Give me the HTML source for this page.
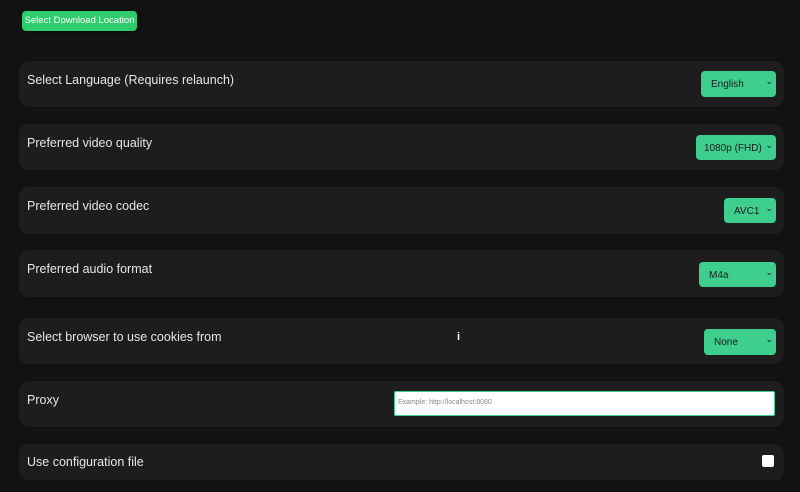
<!DOCTYPE html>
<html><head><style>
body{margin:0;width:800px;height:492px;background:#121212;font-family:"Liberation Sans",sans-serif;position:relative;overflow:hidden}
.btn{position:absolute;left:22px;top:11px;width:115px;height:20px;background:#2ecc6a;border-radius:4px;color:#fff;font-size:9.5px;line-height:20px;text-align:center;white-space:nowrap;box-shadow:0 1px 2px rgba(0,0,0,.5)}
.card{position:absolute;left:19px;width:765px;background:#1d1d1d;border-radius:10px}
.lbl{position:absolute;left:27px;color:#e6e6e6;font-family:"Liberation Sans",sans-serif;font-size:12.5px;white-space:nowrap}
.sel{position:absolute;background:#3ecf8e;border-radius:4px;color:#1a1a1a;font-size:10px;line-height:27px;padding-left:10px;box-sizing:border-box;white-space:nowrap}
.sel:after{content:"⌄";position:absolute;right:3px;top:-3px;font-size:9px}
</style></head><body>
<div class="btn">Select Download Location</div>
<div class="card" style="top:61px;height:46px"></div>
<div class="card" style="top:124px;height:46px"></div>
<div class="card" style="top:187px;height:47px"></div>
<div class="card" style="top:250px;height:47px"></div>
<div class="card" style="top:318px;height:46px"></div>
<div class="card" style="top:381px;height:46px"></div>
<div class="card" style="top:444px;height:36px"></div>
<div class="lbl" style="top:73px">Select Language (Requires relaunch)</div>
<div class="lbl" style="top:136px">Preferred video quality</div>
<div class="lbl" style="top:199px">Preferred video codec</div>
<div class="lbl" style="top:262px">Preferred audio format</div>
<div class="lbl" style="top:330px">Select browser to use cookies from</div>
<div class="lbl" style="top:393px">Proxy</div>
<div class="lbl" style="top:455px">Use configuration file</div>
<div class="sel" style="left:701px;top:71px;width:75px;height:26px">English</div>
<div class="sel" style="left:696px;top:135px;width:80px;height:25px;padding-left:8px">1080p (FHD)</div>
<div class="sel" style="left:724px;top:198px;width:52px;height:25px">AVC1</div>
<div class="sel" style="left:699px;top:262px;width:77px;height:25px">M4a</div>
<div class="sel" style="left:704px;top:329px;width:72px;height:26px">None</div>
<div style="position:absolute;left:457px;top:331px;color:#fff;font-weight:bold;font-size:11px">i</div>
<div style="position:absolute;left:394px;top:391px;width:381px;height:25px;box-sizing:border-box;background:#fff;border:1.5px solid #3ecf8e;border-radius:2px;color:#888;font-size:7px;line-height:22px;padding-left:3px">Example: http://localhost:8080</div>
<div style="position:absolute;left:762px;top:455px;width:12px;height:12px;background:#fff;border-radius:2px"></div>
</body></html>
